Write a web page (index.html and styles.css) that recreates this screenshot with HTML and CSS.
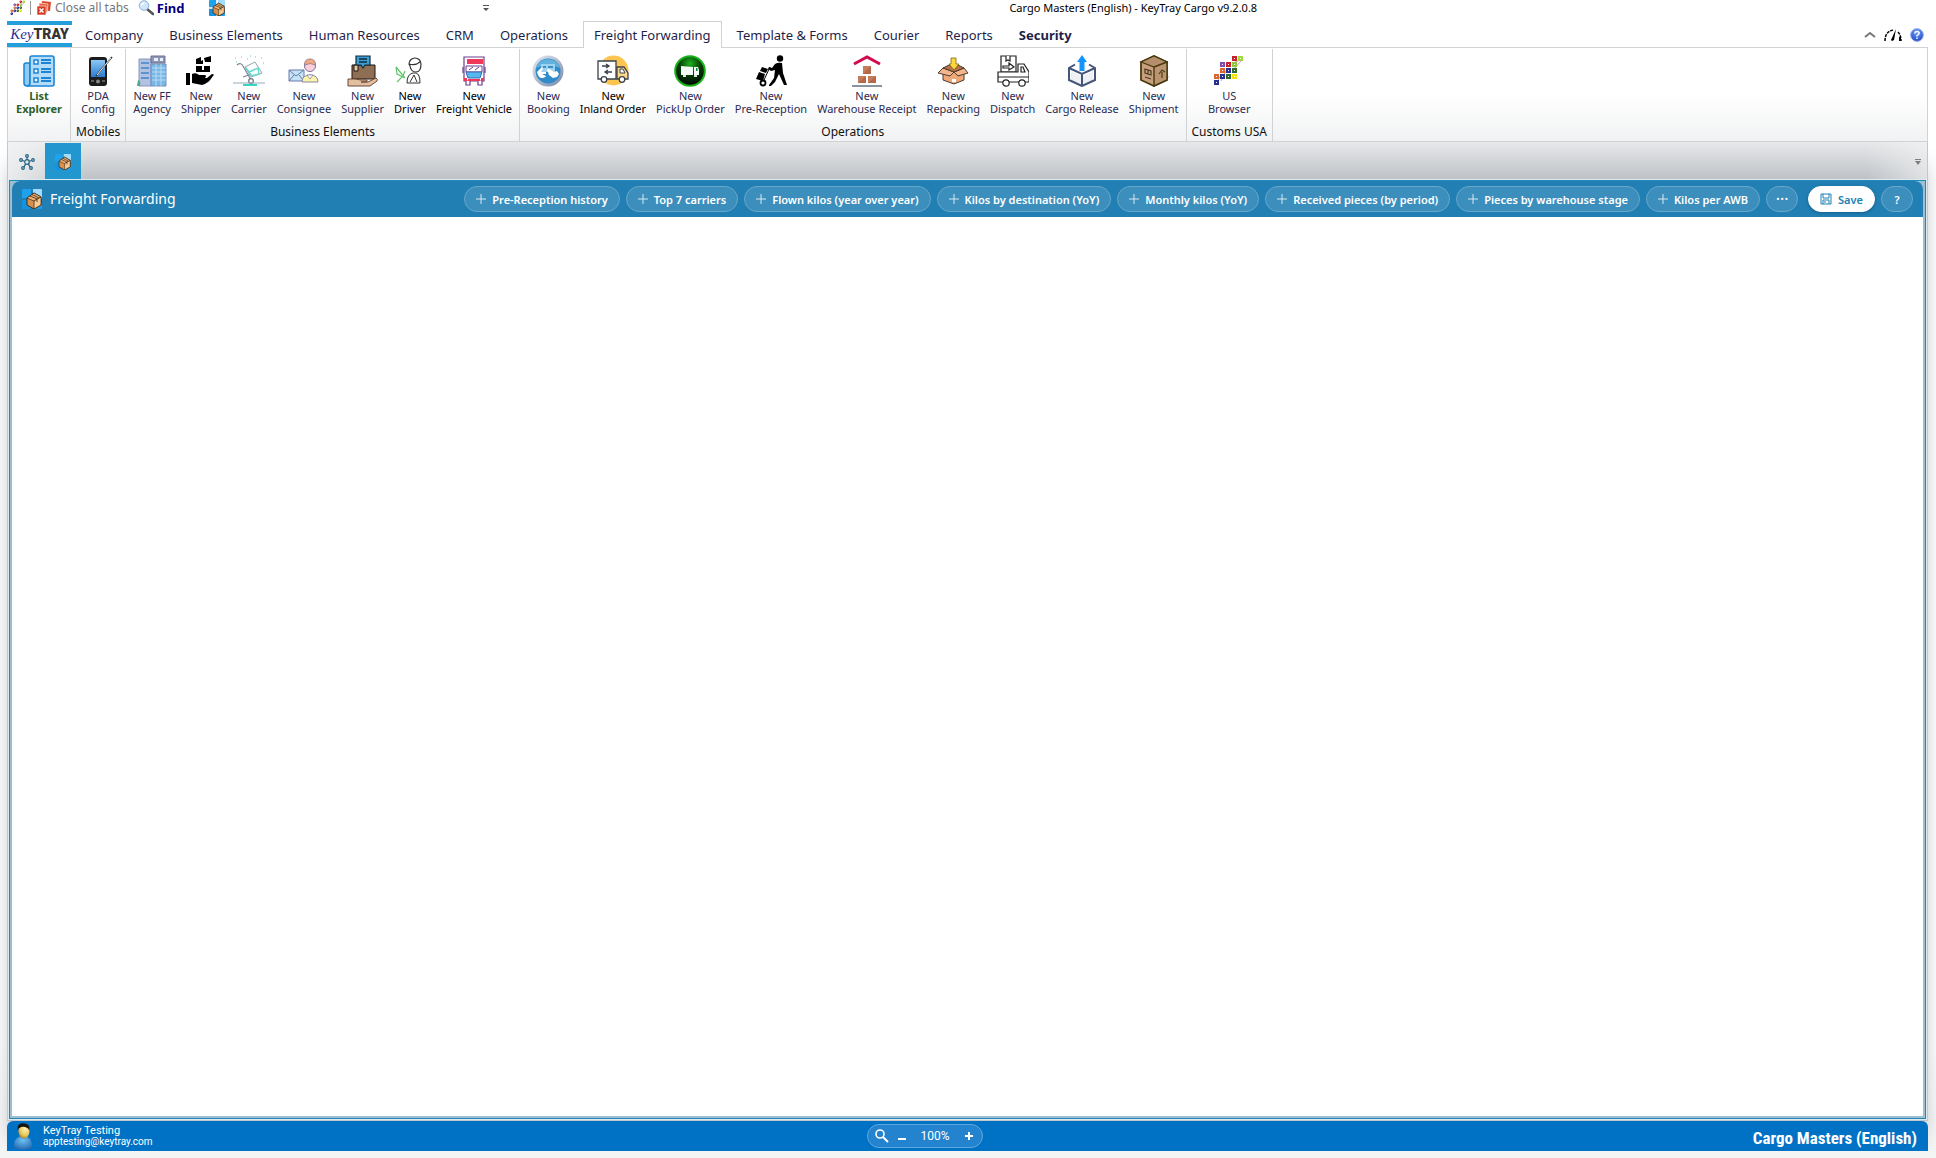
FILE: index.html
```html
<!DOCTYPE html>
<html lang="en">
<head>
<meta charset="utf-8">
<title>Cargo Masters (English) - KeyTray Cargo v9.2.0.8</title>
<link rel="stylesheet" href="styles.css">
</head>
<body>
<svg class="sprite" aria-hidden="true">
  <defs>
    <linearGradient id="g-glass" x1="0" y1="0" x2="0" y2="1"><stop offset="0" stop-color="#8cc8f5"/><stop offset="1" stop-color="#2a7bd0"/></linearGradient>
    <linearGradient id="g-ring" x1="0" y1="0" x2="1" y2="1"><stop offset="0" stop-color="#e8edf5"/><stop offset="1" stop-color="#7486a8"/></linearGradient>
    <radialGradient id="g-green" cx=".5" cy=".25" r=".8"><stop offset="0" stop-color="#1fb31f"/><stop offset=".45" stop-color="#063f06"/><stop offset="1" stop-color="#000"/></radialGradient>
    <radialGradient id="g-help" cx=".5" cy=".3" r=".8"><stop offset="0" stop-color="#6fa4ff"/><stop offset="1" stop-color="#1237b8"/></radialGradient>
    <radialGradient id="g-face" cx=".6" cy=".3" r=".8"><stop offset="0" stop-color="#fff3b8"/><stop offset=".6" stop-color="#e8c85c"/><stop offset="1" stop-color="#8a6a14"/></radialGradient>
    <radialGradient id="g-body" cx=".5" cy=".3" r=".8"><stop offset="0" stop-color="#6cc1f5"/><stop offset="1" stop-color="#1d5fa8"/></radialGradient>

    <symbol id="i-matrix" viewBox="0 0 32 32">
      <path d="M20 8L29 4M14 14L8 26M8 20L2 30M20 15L28 6" stroke="#c9a" fill="none"/>
      <g fill="#fff" stroke-width="2">
        <path d="M20 2h3v3h-3z" stroke="#c8202c"/><path d="M26 2h3v3h-3z" stroke="#a3d93c"/>
        <path d="M8 8h3v3H8z" stroke="#7a4fae"/><path d="M14 8h3v3h-3z" stroke="#c8202c"/><path d="M20 8h3v3h-3z" stroke="#8cc83c"/>
        <path d="M8 14h3v3H8z" stroke="#d9662a"/><path d="M14 14h3v3h-3z" stroke="#2a2f8f"/><path d="M20 14h3v3h-3z" stroke="#2c6b2c"/>
        <path d="M2 20h3v3H2z" stroke="#d9662a"/><path d="M8 20h3v3H8z" stroke="#2a2f8f"/><path d="M14 20h3v3h-3z" stroke="#2c6b2c"/><path d="M20 20h3v3h-3z" stroke="#f2e400"/>
        <path d="M2 26h3v3H2z" stroke="#2a2f8f"/>
      </g>
    </symbol>
    <symbol id="i-box" viewBox="0 0 20 20">
      <path d="M0 1q0-1 1-1h8v9H0z" fill="#1fa2ee"/><path d="M11 0h8q1 0 1 1v9h-9z" fill="#9fdcff"/><path d="M0 11h9v9H1q-1 0-1-1z" fill="#1593e0"/><path d="M11 11h9v8q0 1-1 1h-8z" fill="#1e9ceb"/>
      <path d="M5 9l7-5 7 4v8l-7 4-7-4z" fill="#d9904a" stroke="#3a2410" stroke-width=".9"/>
      <path d="M5 9l7 3 7-4-7-4z" fill="#f0b377" stroke="#3a2410" stroke-width=".7"/>
      <path d="M12 12v8l7-4V8z" fill="#f6c995" stroke="#3a2410" stroke-width=".7"/><path d="M8 7l7 3v3M10 5.500l7 3.500" stroke="#3a2410" fill="none" stroke-width=".8"/>
    </symbol>
    <symbol id="i-closeall" viewBox="0 0 16 16">
      <path d="M6 1l9 1-1 9-9-1z" fill="#d9482c"/><path d="M3 3l9 1-1 9-8-1z" fill="#e8603c" stroke="#fff" stroke-width=".6"/><path d="M1 6h9v9H1z" fill="#d63a22" stroke="#fff" stroke-width=".6"/><path d="M3.500 8.500l4 4m0-4l-4 4" stroke="#fff" stroke-width="1.500"/>
    </symbol>
    <symbol id="i-find" viewBox="0 0 16 16"><path d="M9 9l6 5" stroke="#555" stroke-width="2.600" stroke-linecap="round"/><circle cx="6" cy="5.500" r="4.800" fill="#cfe6fb" stroke="#8fb0d4"/><path d="M3.500 5.500a3 3 0 0 1 3-2.500" stroke="#fff" stroke-width="1.400" fill="none"/></symbol>
    <symbol id="i-list" viewBox="0 0 32 32">
      <path d="M1 10q0-2 2-2h4v20q0 3-3 3t-3-3z" fill="#8ecbf5" stroke="#1a85d6" stroke-width="1.500"/>
      <path d="M7 3q0-2 2-2h20q2 0 2 2v26q0 2-2 2H4q3 0 3-3z" fill="#b5ddf9" stroke="#1a85d6" stroke-width="1.600"/>
      <path d="M11 5h4v4h-4zM11 14h4v4h-4zM11 23h4v4h-4z" fill="#fff" stroke="#1a85d6" stroke-width="1.500"/>
      <path d="M18 5h10M18 8h10M18 14h10M18 17h10M18 23h10M18 26h10" stroke="#1a85d6" stroke-width="1.800"/>
    </symbol>
    <symbol id="i-pda" viewBox="0 0 32 32"><rect x="7" y="2" width="18" height="29" rx="3" fill="#1c1c1e"/><path d="M9 5h14v17H9z" fill="url(#g-glass)"/><path d="M30 2L14 21" stroke="#333" stroke-width="1.600"/><path d="M29 3L15 20" stroke="#eee"/><circle cx="16" cy="26.500" r="2" fill="#888"/><path d="M9 26h3M20 26h3" stroke="#777" stroke-width="1.500"/></symbol>
    <symbol id="i-agency" viewBox="0 0 32 32">
      <path d="M3 4h12v27H3z" fill="#b3c2e0" stroke="#8796be"/><path d="M15 9h15v22H15z" fill="#79b8e6" stroke="#6f8fc0"/><path d="M15 1h14v7H15z" fill="#8f97b4" stroke="#6a7292"/><path d="M18 3h4v3h-4zM24 3h3v3h-3z" fill="#e8eefc"/>
      <path d="M5 8h8M5 13h8M5 18h8M5 23h8" stroke="#5b94cf" stroke-width="2.200"/><path d="M16 13h14M16 17h14M16 21h14M16 25h14M20 9v22M25 9v22" stroke="#c9e4f8" stroke-width=".8"/><path d="M2 25q3 0 2 6H1z" fill="#4fa88c"/>
    </symbol>
    <symbol id="i-shipper" viewBox="0 0 32 32"><path d="M11 4l5-2v4l2-1v4h-7zM19 3l7-2v6h-6zM11 11h6v4h2v-4h6v6H11z"/><path d="M1 18h4v12H1zM7 19q4-2 7 1h6q2 1 0 3h-6 8l5-4q3 0 1 2-5 8-11 9L7 28z"/></symbol>
    <symbol id="i-carrier" viewBox="0 0 32 32"><path d="M4 10q4-3 6 1l8 14M10 22l18-6" fill="none" stroke="#7a8490" stroke-width="1.200"/><path d="M12 12l10-5 7 11-11 4z" fill="#fff" stroke="#8b97a4" stroke-width=".9"/><path d="M13 13l6 8M16 17l9-4 1 6-8 2" stroke="#5fdccf" stroke-width="1.500" fill="none"/><circle cx="18" cy="26" r="2.300" fill="#fff" stroke="#6a7481" stroke-width="1.200"/><path d="M0 28h32" stroke="#93a9b8"/><path d="M10 30h14" stroke="#35d6c2" stroke-width="2"/><path d="M2 3h1M8 2h1M14 4h1M22 2h1M28 3h1M3 7h1M30 8h1M17 1h1" stroke="#8ee2d9" stroke-width="1.500"/></symbol>
    <symbol id="i-consignee" viewBox="0 0 32 32"><path d="M1 15h15v11H1z" fill="#c5e3f5" stroke="#6878ac"/><path d="M1 15l7 6 8-6M1 26l5-6M16 26l-5-6" fill="none" stroke="#6878ac"/><path d="M14 27q0-7 8-7t8 7z" fill="#fbf3a8" stroke="#8f86a0"/><circle cx="22" cy="11" r="5.500" fill="#fbd0d8" stroke="#7a70a4"/><path d="M16.500 10q0-6 5.500-6t5.500 6q-5-3-11 0z" fill="#f2a880" stroke="#a08090"/><path d="M19 20l3 4 3-4z" fill="#fff" stroke="#6a5f90" stroke-width=".6"/></symbol>
    <symbol id="i-supplier" viewBox="0 0 32 32"><path d="M5 10h23v14H5z" fill="#8f6f54" stroke="#1e1410"/><path d="M7 10h4v6H7z" fill="#e8c9a8" stroke="#1e1410"/><path d="M9 1h14v9h-5l-2 3-2-3H9z" fill="#3f9fd0" stroke="#0f2c40" stroke-width="1.200"/><path d="M12 4h8M12 7h8" stroke="#0f2c40" stroke-width="1.300"/><path d="M1 24h7l6 1h6q1 2-2 2h-4 7l8-4q2 1 1 3l-7 5H1z" fill="#e3bfa0" stroke="#6a4a38"/></symbol>
    <symbol id="i-driver" viewBox="0 0 32 32"><path d="M13 28q0-9 6-10h3q4 1 4 10zM16 27l4-7 3 7" fill="#fff" stroke="#333"/><path d="M15 9a6 6 0 0 1 12 0q0 8-5 8t-6-6zM15 9q6 2 11-2" fill="#fff" stroke="#333" stroke-width="1.200"/><path d="M2 12l9 11M2 12l1 7 8 4M3 27l6-6 2-5" stroke="#62c46c" stroke-width="1.200" fill="none"/></symbol>
    <symbol id="i-vehicle" viewBox="0 0 32 32"><path d="M6 2h20v24H6z" fill="#fff" stroke="#6b3f90" stroke-width="1.200"/><path d="M9 4h16v5H9z" fill="#f0385a"/><path d="M8 11h16v6H8z" fill="#fff" stroke="#6b3f90"/><path d="M11 15l4-3M17 15l4-3" stroke="#6b3f90"/><path d="M8 17h16l-2 6H10z" fill="#57b8f0" stroke="#3a6ab0"/><path d="M6 23h3v3H6zM23 23h3v3h-3zM10 24h12v2H10z" fill="#f0385a"/><path d="M8 26v4h4v-4M20 26v4h4v-4M5 12v6M27 12v6" fill="#fff" stroke="#6b3f90" stroke-width="1.200"/></symbol>
    <symbol id="i-booking" viewBox="0 0 32 32"><circle cx="16" cy="16" r="15.500" fill="url(#g-ring)"/><circle cx="16" cy="16" r="12.500" fill="#2f8cc8"/><path d="M4 13a12.500 12.500 0 0 1 24 0q-12-6-24 0z" fill="#62b2de"/><path d="M9 9h14v8H9z" fill="#9fd2ee"/><path d="M11 11h3v2h-3zM16 11h5v2h-5z" fill="#3c90c8"/><path d="M5 17l4-4h2l-2 4h5v2h-4l4 2q-1 2-5 2-3-1-4-6zM15 14h2l5 3 3-1 2 3-2 3-4 1-4-3z" fill="#fff"/></symbol>
    <symbol id="i-inland" viewBox="0 0 32 32"><circle cx="16.500" cy="15.500" r="15" fill="#fcc550"/><path d="M1 6h18v18H1z" fill="#fff" stroke="#39424e" stroke-width="1.300"/><path d="M20 12h7l4 6v6H20z" fill="#fcd98a" stroke="#39424e" stroke-width="1.300"/><path d="M23 14h3l2 4h-5z" fill="#fff" stroke="#39424e"/><path d="M5 11h7m-3-2l3 2-3 2M15 17H8m3-2l-3 2 3 2" stroke="#39424e" stroke-width="1.300" fill="none"/><circle cx="7" cy="24.500" r="2.800" fill="#fff" stroke="#39424e" stroke-width="1.300"/><circle cx="25" cy="24.500" r="2.800" fill="#fff" stroke="#39424e" stroke-width="1.300"/></symbol>
    <symbol id="i-pickup" viewBox="0 0 32 32"><circle cx="16" cy="16" r="14.800" fill="url(#g-green)" stroke="#18b018" stroke-width="2"/><path d="M7 11l12 1v8H7zM20 12h4l1 3v5h-5z" fill="#f4faf4"/><path d="M9 20h3v2H9zM20 20h3v2h-3z" fill="#d4ead4"/><path d="M22 13h1.500v3H22z" fill="#082"/></symbol>
    <symbol id="i-prereception" viewBox="0 0 32 32"><circle cx="25" cy="3.500" r="3.200"/><path d="M20 9q3-2 7-1l1 10 4 12h-3l-5-11-4 8-4 4h-2v-1l5-7 1-8-4 1-3-2 1-2 3 1z"/><path d="M4 17l6 2-2 7-7-2zM7 12l6 2-2 4-6-2z"/><path d="M9 25L15 12" stroke="#000"/><circle cx="8" cy="28" r="2.500" fill="#fff" stroke="#000" stroke-width="1.800"/></symbol>
    <symbol id="i-warehouse" viewBox="0 0 32 32"><path d="M3 9L16 2l13 7" fill="none" stroke="#d40a50" stroke-width="3"/><path d="M12 11h8v8h-8zM7 21h8v7H7zM17 21h8v7h-8z" fill="#b5694a"/><path d="M12 11h8l-8 8zM7 21h8l-8 7zM17 21h8l-8 7z" fill="#c47c5a"/><path d="M1 31h30" stroke="#8a949f" stroke-width="2"/></symbol>
    <symbol id="i-repacking" viewBox="0 0 32 32"><path d="M6 15h21v10l-10 4-11-4z" fill="#f0a878" stroke="#4a3c32"/><path d="M6 13L1 18l12 3 4-4zM27 13l4 5-10 3-4-4z" fill="#f5b58a" stroke="#4a3c32"/><path d="M6 13l6-3h9l6 3-10 4z" fill="#b87048" stroke="#4a3c32"/><path d="M14 3h5v6h3l-5 6-5-6h2z" fill="#ffd93c" stroke="#7a6410" stroke-width=".8"/><path d="M15 24h4v3h-4z" fill="#fff"/></symbol>
    <symbol id="i-dispatch" viewBox="0 0 32 32"><g fill="#fff" stroke="#222" stroke-width="1.200"><path d="M4 1h15v16H4z"/><path d="M9 1v5l2-1 2 1V1"/><path d="M6 11h6V8l5 4-5 3v-2H6z"/><path d="M21 9h6l5 8v10H1V17h20zM24 12h2l2 5h-4zM1 22h31"/><circle cx="9" cy="28" r="3.200"/><circle cx="25" cy="28" r="3.200"/></g></symbol>
    <symbol id="i-release" viewBox="0 0 32 32"><path d="M5 16l10 5v8L5 25zM27 16l-10 5v8l10-4z" fill="#eef0f4"/><path d="M9 9.500l-6 3.500v12l13 6 13-6V13l-6-3.500M3 13l13 6 13-6M16 19v12" fill="none" stroke="#46557a" stroke-width="2"/><path d="M13.500 16V7H11l5-7 5 7h-2.500v9z" fill="#1594ff"/></symbol>
    <symbol id="i-shipment" viewBox="0 0 32 32"><path d="M20 28l12-6-4-3z" fill="#ddd"/><path d="M3 7l13-6 13 6v18l-13 6-13-6z" fill="#c8a07e" stroke="#4a3a10" stroke-width="1.800"/><path d="M3 7l13 5 13-5-13-6z" fill="#b58e6c" stroke="#4a3a10" stroke-width="1.200"/><path d="M16 12v19l13-6V7z" fill="#bb9572" stroke="#4a3a10" stroke-width="1.400"/><path d="M7 14v4l6 2v-4zM10 15v4M7 22l6 2M24 23v-6m-3 2l3-4 3 2" stroke="#4a3a20" stroke-width="1.200" fill="none"/></symbol>
    <symbol id="i-network" viewBox="0 0 16 16"><g fill="none" stroke="#1c5f80" stroke-width="1.200"><circle cx="8" cy="8" r="2.300"/><circle cx="8" cy="2" r="1.300"/><circle cx="2" cy="6" r="1.300"/><circle cx="14" cy="6" r="1.300"/><circle cx="4" cy="14" r="1.300"/><circle cx="12" cy="14" r="1.300"/><path d="M8 3.500v2M3.500 6.500l2 .7M12.500 6.500l-2 .7M5 13l1.500-3M11 13l-1.500-3"/></g></symbol>
    <symbol id="i-gauge" viewBox="0 0 18 14"><path d="M1 13q0-10 9-11M14 4q3 3 3 9" fill="none" stroke="#000" stroke-width="1.500" stroke-dasharray="3 1"/><path d="M12 1l-2 11-2 1-1-1z"/><path d="M16 9v4" stroke="#000" stroke-width="2"/></symbol>
    <symbol id="i-plus" viewBox="0 0 10 10"><path d="M5 0v10M0 5h10" stroke="currentColor" fill="none"/></symbol>
    <symbol id="i-save" viewBox="0 0 12 12"><path d="M1 1h10v10H1zM3 1v4h6V1M3 11V7h6v4M5 8v2" fill="none" stroke="currentColor"/></symbol>
    <symbol id="i-user" viewBox="0 0 24 30"><path d="M2 27q0-12 10-12t10 12q-2 3-10 3T2 27z" fill="url(#g-body)"/><ellipse cx="13" cy="10" rx="6" ry="8" fill="url(#g-face)"/><path d="M6 9q-1-8 6-8 8 0 7 8-2-4-7-4-4 0-6 4z" fill="#16160f"/></symbol>
    <symbol id="i-zoom" viewBox="0 0 14 14"><circle cx="5" cy="5" r="4" fill="none" stroke="#fff" stroke-width="1.600"/><path d="M8 8l5 5" stroke="#fff" stroke-width="2"/></symbol>
  </defs>
</svg>

<div class="app">
  <header class="quickbar">
    <button class="quick" aria-label="Menu"><svg class="ic16"><use href="#i-matrix"/></svg></button>
    <span class="quick-sep"></span>
    <button class="quick close-all"><svg class="ic16"><use href="#i-closeall"/></svg>Close all tabs</button>
    <button class="quick find"><svg class="ic16"><use href="#i-find"/></svg>Find</button>
    <button class="quick" aria-label="Freight"><svg class="ic16"><use href="#i-box"/></svg></button>
    <button class="quick more" aria-label="Customize"><svg class="drop" viewBox="0 0 6 6"><path d="M0 0h6v1H0zM0 3h6L3 6z"/></svg></button>
    <h1 class="window-title">Cargo Masters (English) - KeyTray Cargo v9.2.0.8</h1>
  </header>

  <nav class="tabs">
    <button class="logo"><span class="logo-key">Key</span><span class="logo-tray">TRAY</span></button>
    <button class="tab">Company</button>
    <button class="tab">Business Elements</button>
    <button class="tab">Human Resources</button>
    <button class="tab">CRM</button>
    <button class="tab">Operations</button>
    <button class="tab active">Freight Forwarding</button>
    <button class="tab">Template &amp; Forms</button>
    <button class="tab">Courier</button>
    <button class="tab">Reports</button>
    <button class="tab strong">Security</button>
    <div class="tab-tools">
      <button aria-label="Collapse ribbon"><svg width="12" height="7" viewBox="0 0 12 7"><path d="M1 6l5-4 5 4" fill="none" stroke="#777" stroke-width="2"/></svg></button>
      <button aria-label="Performance"><svg width="18" height="14"><use href="#i-gauge"/></svg></button>
      <button class="help" aria-label="Help"><svg width="14" height="14" viewBox="0 0 14 14"><circle cx="7" cy="7" r="6.400" fill="url(#g-help)" stroke="#9fb4e8"/><path d="M4.800 5.500q0-2 2.200-2t2.200 1.800q0 1-2.200 2.200v1M7 9.500v1.500" fill="none" stroke="#fff" stroke-width="1.400"/></svg></button>
    </div>
  </nav>

  <section class="ribbon">
    <div class="group explorer">
      <div class="items"><button class="cmd green"><svg><use href="#i-list"/></svg>List<br>Explorer</button></div>
    </div>
    <div class="group">
      <div class="items"><button class="cmd"><svg><use href="#i-pda"/></svg>PDA<br>Config</button></div>
      <h2>Mobiles</h2>
    </div>
    <div class="group">
      <div class="items">
        <button class="cmd"><svg><use href="#i-agency"/></svg>New FF<br>Agency</button>
        <button class="cmd"><svg><use href="#i-shipper"/></svg>New<br>Shipper</button>
        <button class="cmd"><svg><use href="#i-carrier"/></svg>New<br>Carrier</button>
        <button class="cmd"><svg><use href="#i-consignee"/></svg>New<br>Consignee</button>
        <button class="cmd"><svg><use href="#i-supplier"/></svg>New<br>Supplier</button>
        <button class="cmd dark"><svg><use href="#i-driver"/></svg>New<br>Driver</button>
        <button class="cmd dark"><svg><use href="#i-vehicle"/></svg>New<br>Freight Vehicle</button>
      </div>
      <h2>Business Elements</h2>
    </div>
    <div class="group">
      <div class="items">
        <button class="cmd"><svg><use href="#i-booking"/></svg>New<br>Booking</button>
        <button class="cmd dark"><svg><use href="#i-inland"/></svg>New<br>Inland Order</button>
        <button class="cmd"><svg><use href="#i-pickup"/></svg>New<br>PickUp Order</button>
        <button class="cmd"><svg><use href="#i-prereception"/></svg>New<br>Pre-Reception</button>
        <button class="cmd"><svg><use href="#i-warehouse"/></svg>New<br>Warehouse Receipt</button>
        <button class="cmd"><svg><use href="#i-repacking"/></svg>New<br>Repacking</button>
        <button class="cmd"><svg><use href="#i-dispatch"/></svg>New<br>Dispatch</button>
        <button class="cmd"><svg><use href="#i-release"/></svg>New<br>Cargo Release</button>
        <button class="cmd"><svg><use href="#i-shipment"/></svg>New<br>Shipment</button>
      </div>
      <h2>Operations</h2>
    </div>
    <div class="group">
      <div class="items"><button class="cmd"><svg><use href="#i-matrix"/></svg>US<br>Browser</button></div>
      <h2>Customs USA</h2>
    </div>
  </section>

  <div class="workspace">
    <div class="doc-tabs">
      <button class="doc-tab" aria-label="Network"><svg class="ic16"><use href="#i-network"/></svg></button>
      <button class="doc-tab current" aria-label="Freight Forwarding"><svg class="ic16"><use href="#i-box"/></svg></button>
      <button class="doc-more" aria-label="Tab list"><svg class="drop" viewBox="0 0 6 6"><path d="M0 0h6v1H0zM0 2h6L3 6z"/></svg></button>
    </div>
    <main class="frame">
      <div class="page">
        <div class="page-head">
          <svg class="ic20"><use href="#i-box"/></svg>
          <h2 class="page-title">Freight Forwarding</h2>
          <div class="pills">
            <button class="pill"><svg><use href="#i-plus"/></svg>Pre-Reception history</button>
            <button class="pill"><svg><use href="#i-plus"/></svg>Top 7 carriers</button>
            <button class="pill"><svg><use href="#i-plus"/></svg>Flown kilos (year over year)</button>
            <button class="pill"><svg><use href="#i-plus"/></svg>Kilos by destination (YoY)</button>
            <button class="pill"><svg><use href="#i-plus"/></svg>Monthly kilos (YoY)</button>
            <button class="pill"><svg><use href="#i-plus"/></svg>Received pieces (by period)</button>
            <button class="pill"><svg><use href="#i-plus"/></svg>Pieces by warehouse stage</button>
            <button class="pill"><svg><use href="#i-plus"/></svg>Kilos per AWB</button>
            <button class="pill round dots">···</button>
            <button class="pill save"><svg><use href="#i-save"/></svg>Save</button>
            <button class="pill round">?</button>
          </div>
        </div>
      </div>
    </main>
  </div>

  <footer class="status">
    <div class="user">
      <svg width="22" height="28"><use href="#i-user"/></svg>
      <div class="user-text"><span class="user-name">KeyTray Testing</span><span class="user-mail">apptesting@keytray.com</span></div>
    </div>
    <div class="zoom">
      <svg width="14" height="14"><use href="#i-zoom"/></svg>
      <button aria-label="Zoom out"><svg width="8" height="12" viewBox="0 0 8 12"><path d="M0 9h8" stroke="#fff" stroke-width="2"/></svg></button>
      <span class="zoom-value">100%</span>
      <button aria-label="Zoom in"><svg width="8" height="8" viewBox="0 0 8 8"><path d="M0 4h8M4 0v8" stroke="#fff" stroke-width="2"/></svg></button>
    </div>
    <strong class="company">Cargo Masters (English)</strong>
  </footer>
</div>
</body>
</html>
```
FILE: styles.css
```css
* { box-sizing: border-box; }
html { overflow: hidden; }
body {
  margin: 0;
  font-family: "Noto Sans", "Open Sans", sans-serif;
  font-size: 11px;
  color: #1f1f4a;
  background: #fff;
}
button {
  font: inherit;
  color: inherit;
  background: none;
  border: 0;
  padding: 0;
  margin: 0;
}
h1, h2 { margin: 0; font-weight: 400; }
svg { display: block; flex: none; }
.sprite { position: absolute; width: 0; height: 0; }
.ic16 { width: 16px; height: 16px; }
.ic20 { width: 20px; height: 20px; }
.drop { width: 6px; height: 6px; fill: #555; }

.app {
  min-height: 100vh;
  display: flex;
  flex-direction: column;
  padding: 0 8px 7px 7px;
  background: linear-gradient(#fff 90%, #f3f4f4);
}

/* Quick access bar */
.quickbar {
  display: flex;
  align-items: center;
  height: 21px;
  padding: 0 156px 6px 3px;
}
.quick { display: flex; align-items: center; gap: 3px; }
.quick-sep { width: 1px; height: 14px; margin: 0 5px 0 4px; background: #999; }
.close-all { color: #777; font-size: 12px; }
.find { margin-left: 9px; color: #000080; font-size: 13px; font-weight: 700; }
.find + .quick { margin-left: 24px; }
.more { width: 18px; margin-left: 252px; justify-content: center; }
.window-title { flex: 1; text-align: center; font-size: 11px; color: #000; }

/* Ribbon tabs */
.tabs { display: flex; gap: 4px; height: 27px; position: relative; }
.tabs::before {
  content: "";
  position: absolute;
  inset: auto 0 0;
  border-bottom: 1px solid #d0d2d3;
}
.logo {
  width: 65px;
  height: 26px;
  display: flex;
  justify-content: center;
  align-items: center;
  border: solid #259fdc;
  border-width: 4px 0;
  color: #333;
}
.logo-key { font: italic 15px "Liberation Serif", serif; color: #2b2f94; }
.logo-tray { font: 900 14px Roboto, sans-serif; }
.tab {
  position: relative;
  padding: 0 10px 1px;
  border: 1px solid transparent;
  border-bottom: 0;
  font-size: 13px;
}
.logo + .tab { margin-left: -2px; }
.tab.active { border-color: #d0d2d3; background: #fff; }
.tab.strong { font-weight: 700; }
.tab-tools {
  display: flex;
  align-items: center;
  gap: 8px;
  margin: 0 4px 0 auto;
}

/* Ribbon */
.ribbon {
  display: flex;
  padding-top: 1px;
  min-height: 94px;
  border: 1px solid #d0d2d3;
  border-top: 0;
  background: linear-gradient(#fff 50%, #f1f2f3);
}
.group {
  display: flex;
  flex-direction: column;
  justify-content: space-between;
  align-items: center;
  padding: 6px 2px 1px;
  border-right: 1px solid #d0d2d3;
}
.group h2 { padding: 0 3px; font-size: 12px; line-height: 16px; color: #111; }
.explorer { min-width: 63px; }
.items { display: flex; }
.cmd {
  display: block;
  padding: 0 5px;
  line-height: 13px;
  text-align: center;
  color: #2b2b52;
}
.cmd svg { width: 32px; height: 32px; margin: 0 auto 2px; }
.cmd.dark { color: #000; }
.cmd.green { color: #2c602c; font-weight: 700; }

/* Document area */
.workspace {
  flex: 1;
  display: flex;
  flex-direction: column;
  border: solid #c4c6c8;
  border-width: 0 1px 1px;
  background:
    linear-gradient(90deg, #f4f5f6cc, #f4f5f600 80px, #f4f5f600 calc(100% - 60px), #f4f5f699) top / 100% 38px no-repeat,
    linear-gradient(#e7e8ea, #bdc1c5 38px, #d8dadc);
  box-shadow: 0 20px 20px -4px #b4b8bc;
  clip-path: inset(0 -8px -30px);
}
.doc-tabs { display: flex; height: 38px; padding-top: 1px; }
.doc-tab { width: 37px; display: flex; align-items: center; justify-content: center; }
.doc-tab.current { width: 36px; background: #2196cf; }
.doc-more { margin-left: auto; width: 18px; display: flex; align-items: center; justify-content: center; opacity: .7; }
.frame {
  flex: 1;
  display: flex;
  margin: 0 1px 1px;
  border: 1px solid #2088bb;
  outline: 1px solid #dfe8ec;
  background: #9dbfd0;
  padding: 0 2px 2px;
}
.page { flex: 1; background: #fff; border-radius: 8px 8px 0 0; overflow: hidden; }
.page-head {
  display: flex;
  align-items: center;
  min-height: 36px;
  padding: 0 10px;
  background: #217fb3;
  color: #fff;
}
.page-title { margin-left: 8px; font-size: 14px; line-height: 20px; }
.pills { display: flex; gap: 6px; margin-left: auto; }
.pill {
  display: flex;
  align-items: center;
  gap: 6px;
  height: 26px;
  padding: 0 11px;
  border: 1px solid #66a7cb;
  border-radius: 13px;
  background: #3c8fbd;
  font-weight: 600;
  white-space: nowrap;
}
.pill svg { width: 10px; height: 10px; opacity: .8; }
.pill.round { width: 32px; padding: 0; justify-content: center; }
.pill.dots { font-size: 16px; font-weight: 400; }
.pill.save { margin-left: 4px; background: #fff; border-color: #fff; color: #2180b4; box-shadow: 0 1px 3px #145f8c; }
.pill.save svg { width: 12px; height: 12px; opacity: 1; }

/* Status bar */
.status {
  position: relative;
  display: grid;
  grid-template-columns: 10fr auto 11fr;
  align-items: center;
  height: 30px;
  border-radius: 6px 6px 0 0;
  background: #0072c6;
  color: #fff;
  font-family: Roboto, sans-serif;
}
.app::after {
  content: "";
  position: relative;
  height: 7px;
  margin: 0 -8px -7px -7px;
  background: #f3f4f4;
}
.user { display: flex; align-items: center; gap: 9px; padding-left: 5px; }
.user-text { display: flex; flex-direction: column; line-height: 11px; }
.user-name { font-size: 11px; }
.user-mail { font-size: 10px; }
.zoom {
  display: flex;
  align-items: center;
  justify-content: space-between;
  width: 116px;
  height: 24px;
  padding: 0 9px 0 7px;
  border: 1px solid #5fa8de;
  border-radius: 12px;
  background: #2383cf;
}
.zoom-value { font-size: 12px; margin: 0 6px; }
.company {
  justify-self: end;
  padding: 4px 11px 0 0;
  font: 700 17px "Roboto Condensed", "Liberation Sans Narrow", Roboto, sans-serif;
}
```
